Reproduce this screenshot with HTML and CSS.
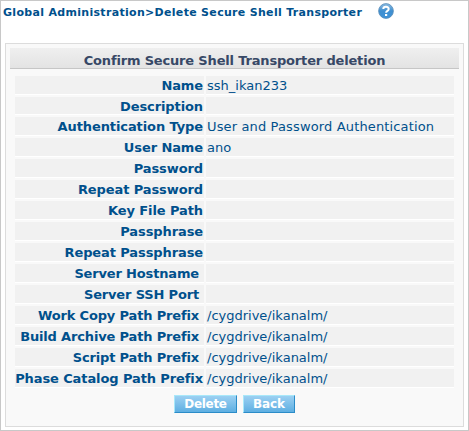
FILE: index.html
```html
<!DOCTYPE html>
<html lang="en">
<head>
<meta charset="utf-8">
<title>Delete Secure Shell Transporter</title>
<link rel="stylesheet" href="styles.css">
</head>
<body>
<div class="page">
  <header class="crumbs">
    <span class="path">Global Administration&gt;Delete Secure Shell Transporter</span>
    <svg class="help" width="16" height="16" viewBox="0 0 16 16">
      <defs><linearGradient id="ball" x1="0" y1="0" x2="0" y2="1"><stop offset="0" stop-color="#8dbde3"/><stop offset=".5" stop-color="#3f8fd0"/><stop offset="1" stop-color="#3f93d8"/></linearGradient></defs>
      <circle cx="8" cy="8" r="7.4" fill="url(#ball)" stroke="#5a8db8" stroke-width=".8"/>
      <path d="M5.3 6.1C5.3 3.2 10.7 3 10.7 6C10.7 7.9 8.1 7.8 8.1 9.8" fill="none" stroke="#fff" stroke-width="2"/>
      <rect x="7" y="11" width="2.2" height="2" fill="#fff"/>
    </svg>
  </header>
  <main class="panel">
    <h1><span>Confirm Secure Shell Transporter deletion</span></h1>
    <dl class="fields">
      <dt>Name</dt><dd>ssh_ikan233</dd>
      <dt class="short">Description</dt><dd class="short"></dd>
      <dt>Authentication Type</dt><dd class="auth">User and Password Authentication</dd>
      <dt>User Name</dt><dd>ano</dd>
      <dt>Password</dt><dd></dd>
      <dt>Repeat Password</dt><dd></dd>
      <dt>Key File Path</dt><dd></dd>
      <dt>Passphrase</dt><dd></dd>
      <dt>Repeat Passphrase</dt><dd></dd>
      <dt class="inset">Server Hostname</dt><dd></dd>
      <dt class="inset">Server SSH Port</dt><dd></dd>
      <dt class="inset">Work Copy Path Prefix</dt><dd>/cygdrive/ikanalm/</dd>
      <dt class="inset">Build Archive Path Prefix</dt><dd>/cygdrive/ikanalm/</dd>
      <dt class="inset">Script Path Prefix</dt><dd>/cygdrive/ikanalm/</dd>
      <dt>Phase Catalog Path Prefix</dt><dd>/cygdrive/ikanalm/</dd>
    </dl>
    <div class="actions"><button class="delete">Delete</button><button class="back">Back</button></div>
  </main>
</div>
</body>
</html>
```
FILE: styles.css
```css
* { box-sizing: border-box; }
body { margin: 0; background: #fff; font-family: Verdana, "DejaVu Sans", sans-serif; color: #00508c; }
.page { width: 469px; height: 431px; border: 1px solid #c8c8c8; padding: 0 4px; overflow: hidden; }
.crumbs { height: 42px; display: flex; align-items: flex-start; margin-left: -2px; padding-top: 2px; }
.path { width: 375px; font-size: 11px; line-height: 20px; font-weight: bold; letter-spacing: .31px; white-space: nowrap; }
.help { flex: none; }
.panel { height: 384px; border: 1px solid #dcdcdc; background: #f9f9f9; padding: 4px; }
h1 { margin: 0; height: 21px; border-bottom: 1px solid #c6c6c6; background: linear-gradient(#efefef, #e3e3e3); font-size: 13px; line-height: 25px; letter-spacing: -.17px; text-align: center; color: #374866; white-space: nowrap; }
.fields { margin: 7px 5px 0; display: grid; grid-template-columns: 189px 248px; column-gap: 2px; row-gap: 2px; }
.fields dt, .fields dd { margin: 0; height: 19px; border-bottom: 1px solid #fff; background: #f1f1f1; font-size: 13px; line-height: 19px; white-space: nowrap; }
.fields .short { height: 18px; }
.fields dt { text-align: right; font-weight: bold; letter-spacing: -.1px; padding-right: 1px; display: flex; justify-content: flex-end; }
.fields .inset { padding-right: 5px; letter-spacing: -.16px; }
.fields dd { padding-left: 1px; }
.fields .auth { letter-spacing: .14px; }
.actions { display: flex; justify-content: center; gap: 6px; margin-top: 7px; }
button { height: 18px; padding: 0; border: 1px solid; border-color: #a8e8fa #2b8cc8 #2b8cc8 #a8e8fa; background: linear-gradient(#9bd0f2, #5eafe2); color: #fff; font: bold 12px/16px Verdana, "DejaVu Sans", sans-serif; }
.delete { width: 63px; letter-spacing: -.3px; }
.back { width: 52px; letter-spacing: -.1px; }
```
